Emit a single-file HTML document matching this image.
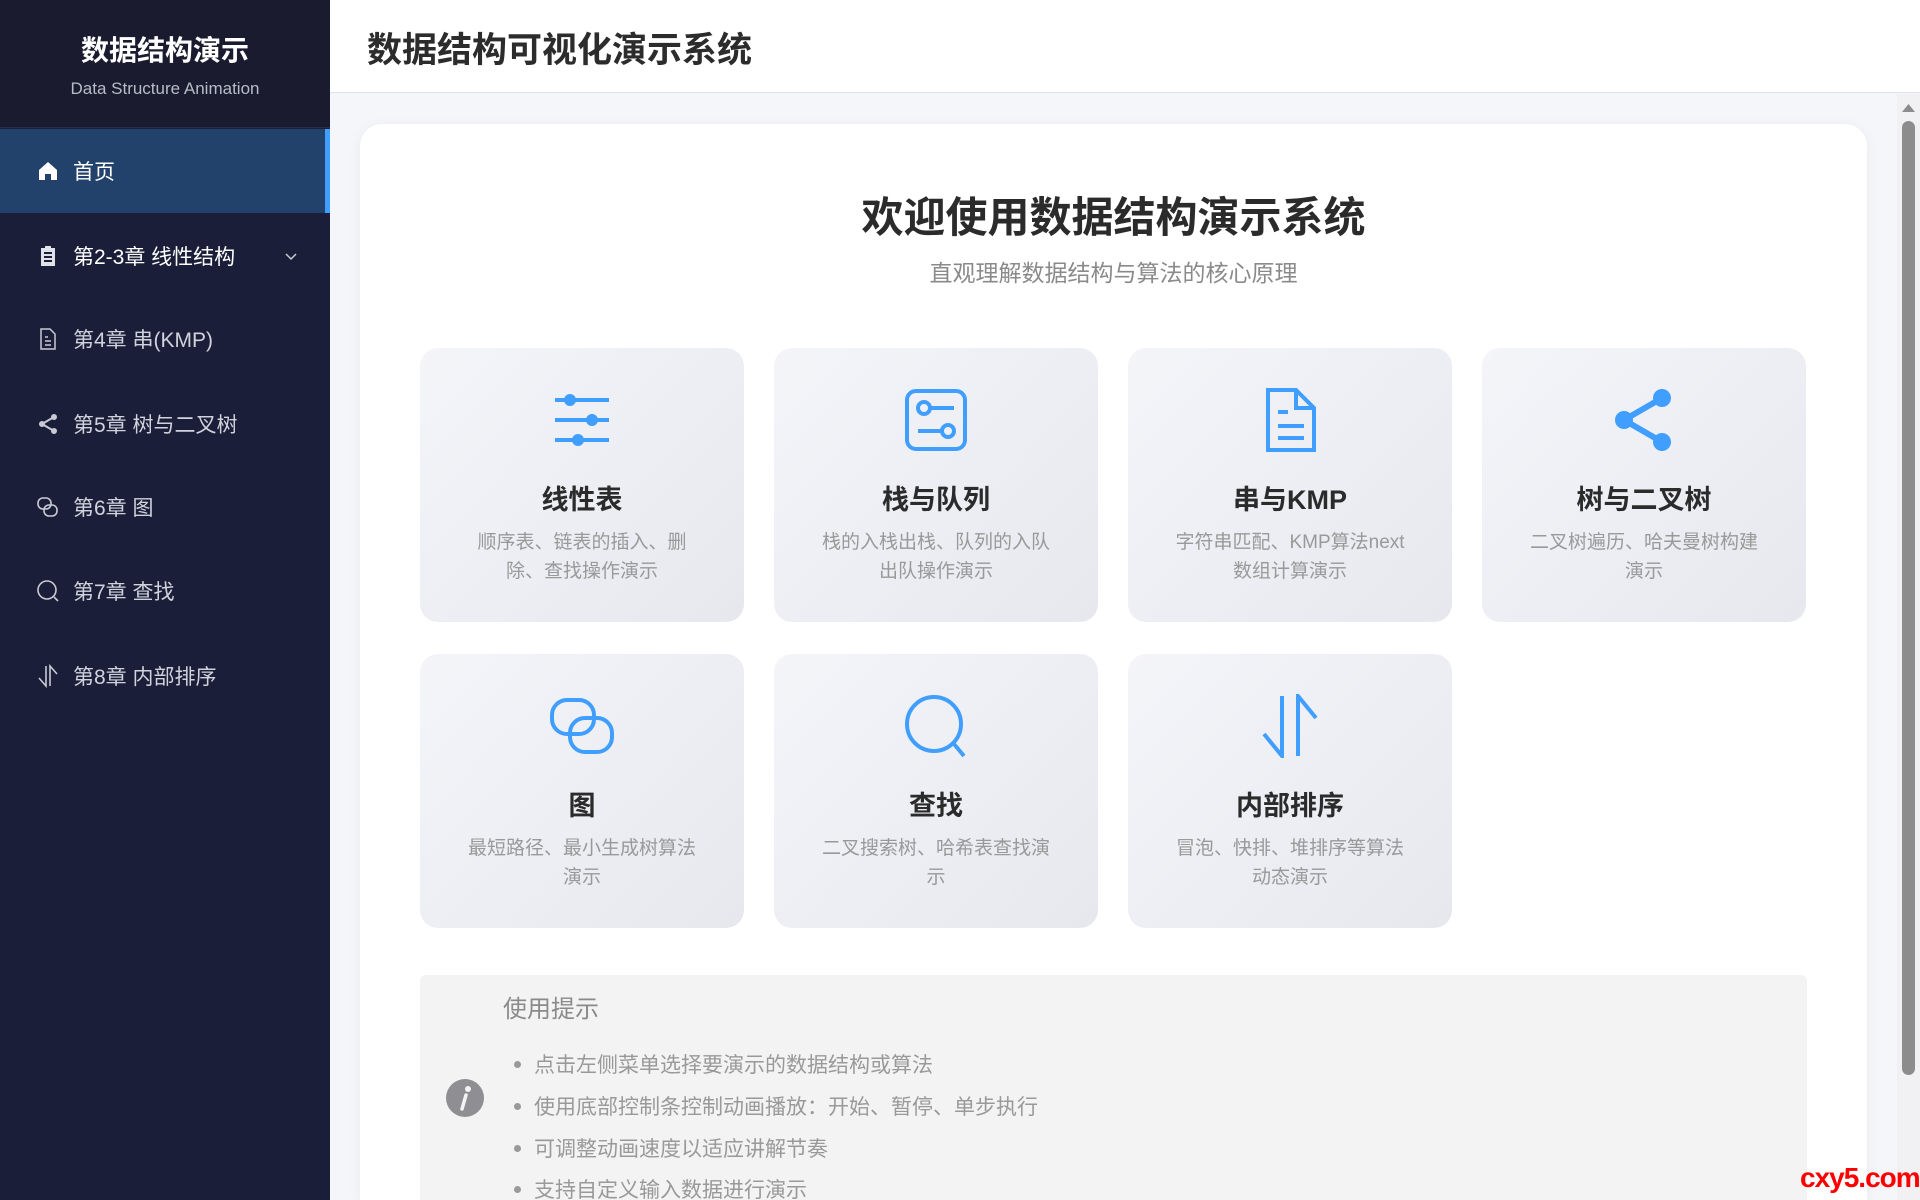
<!DOCTYPE html>
<html style="width:1920px;height:1200px;overflow:hidden"><head><meta charset="utf-8"><style>
*{margin:0;padding:0;box-sizing:border-box}
body{width:1920px;height:1200px;overflow:hidden;font-family:"Liberation Sans","Noto Sans CJK SC",sans-serif;background:#f5f6fa;position:relative}
.side{position:absolute;left:0;top:0;width:330px;height:1200px;background:#1a1e38}
.logo{height:128px;background:#1a1b2e;text-align:center;color:#fff;border-bottom:1px solid #2a2e48}
.logo h1{font-size:28px;font-weight:bold;padding-top:33px;line-height:36px}
.logo p{font-size:17px;color:#b8bcc8;margin-top:10px}
.item{position:absolute;left:0;width:330px;height:84px;display:flex;align-items:center;color:#d0d3dc;font-size:21px}
.item svg{position:absolute;left:36px;width:24px;height:24px}
.item span{position:absolute;left:73px}
.item.act{background:#23426b;color:#fff;border-right:5px solid #409eff}
.top{position:absolute;left:330px;top:0;right:0;height:93px;background:#fff;border-bottom:1px solid #dfe1e8}
.top h2{position:absolute;left:37px;top:30px;font-size:35px;font-weight:bold;color:#2c2c2c;line-height:42px}
.card{position:absolute;left:360px;top:124px;width:1507px;height:1076px;background:#fff;border-radius:22px 22px 0 0;box-shadow:0 2px 14px rgba(0,0,0,.05)}
.wel{position:absolute;left:360px;width:1507px;text-align:center}
.f{position:absolute;width:324px;height:274px;border-radius:18px;background:linear-gradient(135deg,#f4f5f9,#e6e8ee);text-align:center}
.f svg{position:absolute;left:130px;top:40px;width:64px;height:64px}
.f h3{position:absolute;top:130px;width:100%;font-size:27px;color:#2b2b2b;font-weight:bold}
.f p{position:absolute;top:180px;left:40px;right:40px;font-size:19px;line-height:29px;color:#999}
.tips{position:absolute;left:420px;top:975px;width:1387px;height:225px;background:#f3f3f3;border-radius:6px 6px 0 0;overflow:hidden}
.tips h4{position:absolute;left:83px;top:14px;font-size:24px;font-weight:normal;color:#8a8a8a}
.tips li{position:absolute;left:114px;font-size:21px;color:#999;list-style:none}
.tips li:before{content:"";position:absolute;left:-20px;top:12px;width:7px;height:7px;border-radius:50%;background:#999}
.sb{position:absolute;left:1897px;top:94px;width:23px;height:1106px;background:#f1f1f3}
</style></head><body>
<div class="side">
<div class="logo"><h1>数据结构演示</h1><p>Data Structure Animation</p></div>
<div class="item act" style="top:129px"><svg viewBox="0 0 24 24"><path d="M3 11L12 3L21 11V21H15V15H9V21H3Z" fill="#fff"/></svg><span>首页</span></div>
<div class="item" style="top:214px;color:#fff"><svg viewBox="0 0 24 24"><path d="M5 4H9V2H15V4H19V22H5Z" fill="#e0e2e8"/><path d="M8 9H16M8 13H16M8 17H16" stroke="#1a1e38" stroke-width="2"/></svg><span>第2-3章 线性结构</span><svg style="left:283px;width:16px" viewBox="0 0 16 16"><path d="M3 6L8 11L13 6" stroke="#c8cbd4" stroke-width="1.5" fill="none"/></svg></div>
<div class="item" style="top:297px"><svg viewBox="0 0 24 24" fill="none" stroke="#c8cbd4" stroke-width="1.5"><path d="M5 2H14L19 7V22H5Z"/><path d="M9 10H12M9 14H15M9 18H15"/></svg><span>第4章 串(KMP)</span></div>
<div class="item" style="top:382px"><svg viewBox="0 0 24 24" fill="#c8cbd4"><circle cx="18" cy="5" r="3"/><circle cx="6" cy="12" r="3"/><circle cx="18" cy="19" r="3"/><path d="M18 5L6 12L18 19" stroke="#c8cbd4" stroke-width="2" fill="none"/></svg><span>第5章 树与二叉树</span></div>
<div class="item" style="top:465px"><svg viewBox="0 0 24 24" fill="none" stroke="#c8cbd4" stroke-width="1.6"><rect x="2" y="3" width="13" height="11" rx="5"/><rect x="8" y="10" width="13" height="11" rx="5"/></svg><span>第6章 图</span></div>
<div class="item" style="top:549px"><svg viewBox="0 0 24 24" fill="none" stroke="#c8cbd4" stroke-width="1.6"><circle cx="11" cy="11" r="9"/><path d="M18 18L22 22"/></svg><span>第7章 查找</span></div>
<div class="item" style="top:634px"><svg viewBox="0 0 24 24" fill="none" stroke="#c8cbd4" stroke-width="1.6"><path d="M10 2V22L3 14M14 22V2L21 10"/></svg><span>第8章 内部排序</span></div>
</div>
<div class="top"><h2>数据结构可视化演示系统</h2></div>
<div class="card"></div>
<div class="wel" style="top:184px;font-size:42px;font-weight:bold;color:#2b2b2b">欢迎使用数据结构演示系统</div>
<div class="wel" style="top:254px;font-size:23px;color:#8a8a8a">直观理解数据结构与算法的核心原理</div>

<div class="f" style="left:420px;top:348px"><svg viewBox="0 0 64 64" fill="#409eff" stroke="#409eff" stroke-width="4"><path d="M5 12H59M5 32H59M5 52H59"/><circle cx="20" cy="12" r="4"/><circle cx="42" cy="32" r="4"/><circle cx="28" cy="52" r="4"/></svg><h3>线性表</h3><p>顺序表、链表的插入、删除、查找操作演示</p></div>
<div class="f" style="left:774px;top:348px"><svg viewBox="0 0 64 64" fill="none" stroke="#409eff" stroke-width="4"><rect x="3" y="3" width="58" height="58" rx="9"/><circle cx="20" cy="20" r="6"/><circle cx="44" cy="43" r="6"/><path d="M26 20H50M14 43H38"/></svg><h3>栈与队列</h3><p>栈的入栈出栈、队列的入队出队操作演示</p></div>
<div class="f" style="left:1128px;top:348px"><svg viewBox="0 0 64 64" fill="none" stroke="#409eff" stroke-width="4"><path d="M10 2H38L56 20V62H10Z"/><path d="M38 2V20H56M20 24H30M20 38H46M20 50H46"/></svg><h3>串与KMP</h3><p>字符串匹配、KMP算法next数组计算演示</p></div>
<div class="f" style="left:1482px;top:348px"><svg viewBox="0 0 64 64" fill="#409eff"><circle cx="50" cy="10" r="9"/><circle cx="12" cy="32" r="9"/><circle cx="50" cy="54" r="9"/><path d="M50 10L12 32L50 54" stroke="#409eff" stroke-width="6" fill="none"/></svg><h3>树与二叉树</h3><p>二叉树遍历、哈夫曼树构建演示</p></div>
<div class="f" style="left:420px;top:654px"><svg viewBox="0 0 64 64" fill="none" stroke="#409eff" stroke-width="4"><rect x="2" y="6" width="42" height="34" rx="15"/><rect x="20" y="24" width="42" height="34" rx="15"/></svg><h3>图</h3><p>最短路径、最小生成树算法演示</p></div>
<div class="f" style="left:774px;top:654px"><svg viewBox="0 0 64 64" fill="none" stroke="#409eff" stroke-width="4"><circle cx="30" cy="30" r="27"/><path d="M50 50L60 62"/></svg><h3>查找</h3><p>二叉搜索树、哈希表查找演示</p></div>
<div class="f" style="left:1128px;top:654px"><svg viewBox="0 0 64 64" fill="none" stroke="#409eff" stroke-width="4"><path d="M24 2V62L6 40M40 62V2L58 24"/></svg><h3>内部排序</h3><p>冒泡、快排、堆排序等算法动态演示</p></div>

<div class="tips"><h4>使用提示</h4>
<svg style="position:absolute;left:26px;top:104px" width="38" height="38" viewBox="0 0 38 38"><circle cx="19" cy="19" r="19" fill="#8e8e93"/><circle cx="22" cy="10" r="3" fill="#f3f3f3"/><path d="M20 16L16 30" stroke="#f3f3f3" stroke-width="3.5" stroke-linecap="round"/></svg>
<ul><li style="top:74px">点击左侧菜单选择要演示的数据结构或算法</li>
<li style="top:116px">使用底部控制条控制动画播放：开始、暂停、单步执行</li>
<li style="top:158px">可调整动画速度以适应讲解节奏</li>
<li style="top:199px">支持自定义输入数据进行演示</li></ul></div>

<div class="sb"><svg style="position:absolute;left:5px;top:8px" width="13" height="10"><path d="M0 10L6.5 2L13 10Z" fill="#8c8c8c"/></svg><div style="position:absolute;left:5px;top:27px;width:13px;height:954px;border-radius:7px;background:#8c8c8c"></div></div>
<div style="position:absolute;left:1800px;top:1162px;font-size:28px;font-weight:bold;color:#f00;font-family:'Liberation Sans',sans-serif;letter-spacing:-1px">cxy5.com</div>
</body></html>
